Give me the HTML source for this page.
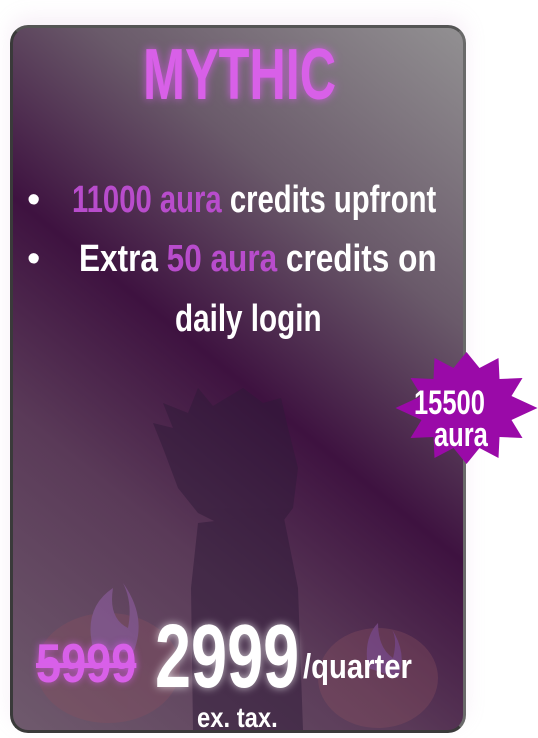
<!DOCTYPE html>
<html><head><style>
html,body{margin:0;padding:0;background:#fff;width:538px;height:738px;overflow:hidden;position:relative}
.f{font-family:"Liberation Sans",sans-serif;font-weight:bold;transform-origin:0 0}
.card{position:absolute;left:10px;top:25px;width:450px;height:702px;border:3px solid #3a3a3a;border-top-color:#555;border-right-color:#6a6a6a;border-radius:18px;
background:linear-gradient(39deg,#6f5a6d 0%,#5a3a58 30%,#3e1240 50%,#6a5a6a 72%,#929092 100%);overflow:hidden;box-shadow:0 -8px 20px rgba(200,150,200,.15)}
.t{position:absolute;white-space:nowrap;line-height:1}
.m{color:#b84ccc}
</style></head><body>
<div class="card">
<svg style="position:absolute;left:0;top:0" width="450" height="702">
<g fill="#2e1a38" opacity=".5">
<path d="M150 420 L140 395 L160 400 L150 375 L175 385 L185 360 L200 378 L230 360 L250 375 L268 370 L275 400 L285 440 L280 480 L265 500 L240 505 L215 500 L185 485 L165 460 Z"/>
<path d="M185 495 L270 485 L285 560 L290 702 L180 702 L178 560 Z"/>
</g>
<g opacity=".35">
<ellipse cx="95" cy="640" rx="72" ry="55" fill="#8a5060"/>
<path d="M80 620 Q70 580 100 560 Q95 590 115 600 Q120 575 110 555 Q135 590 120 625 Z" fill="#b070d0"/>
<ellipse cx="365" cy="650" rx="60" ry="50" fill="#8a5060"/>
<path d="M355 640 Q350 610 365 595 Q365 620 380 630 Q385 610 378 600 Q395 625 385 650 Z" fill="#b070d0"/>
</g>
</svg>
</div>
<div class="t f" style="left:143px;top:39px;font-size:72px;color:#d860e8;text-shadow:0 0 10px rgba(220,90,240,.8);transform:scaleX(.7)">MYTHIC</div>
<div class="t" style="left:27px;top:181px;font-size:38px;color:#fff;font-family:'Liberation Sans'">•</div>
<div class="t f" style="left:72px;top:181px;font-size:38px;color:#fff;transform:scaleX(.77)"><span class="m">11000 aura</span> credits upfront</div>
<div class="t" style="left:27px;top:240px;font-size:38px;color:#fff;font-family:'Liberation Sans'">•</div>
<div class="t f" style="left:79px;top:240px;font-size:38px;color:#fff;transform:scaleX(.83)">Extra <span class="m">50 aura</span> credits on</div>
<div class="t f" style="left:175px;top:300px;font-size:38px;color:#fff;transform:scaleX(.78)">daily login</div>
<svg style="position:absolute;left:395px;top:352px" width="143" height="112" viewBox="-71.5 -56 143 112">
<polygon fill="#9a0aa8" points="0,-56 13,-40 32,-50 33,-29 56,-30 45,-12 71,0 45,12 56,30 33,29 32,50 13,40 0,56 -13,40 -32,50 -33,29 -56,30 -45,12 -71,0 -45,-12 -56,-30 -33,-29 -32,-50 -13,-40"/>
</svg>
<div class="t f" style="left:414px;top:386px;font-size:34px;color:#fff;transform:scaleX(.75)">15500</div>
<div class="t f" style="left:434px;top:418px;font-size:34px;color:#fff;transform:scaleX(.75)">aura</div>
<div class="t f" style="left:36px;top:636px;font-size:55px;color:#d860e8;text-decoration:line-through;text-shadow:0 0 8px rgba(220,90,240,.7);transform:scaleX(.82)">5999</div>
<div class="t f" style="left:155px;top:612px;font-size:90px;color:#fff;text-shadow:0 0 10px rgba(255,255,255,.7);transform:scaleX(.72)">2999</div>
<div class="t f" style="left:303px;top:650px;font-size:34px;color:#fff;transform:scaleX(.86)">/quarter</div>
<div class="t f" style="left:197px;top:704px;font-size:28px;color:#fff;transform:scaleX(.85)">ex. tax.</div>
</body></html>
